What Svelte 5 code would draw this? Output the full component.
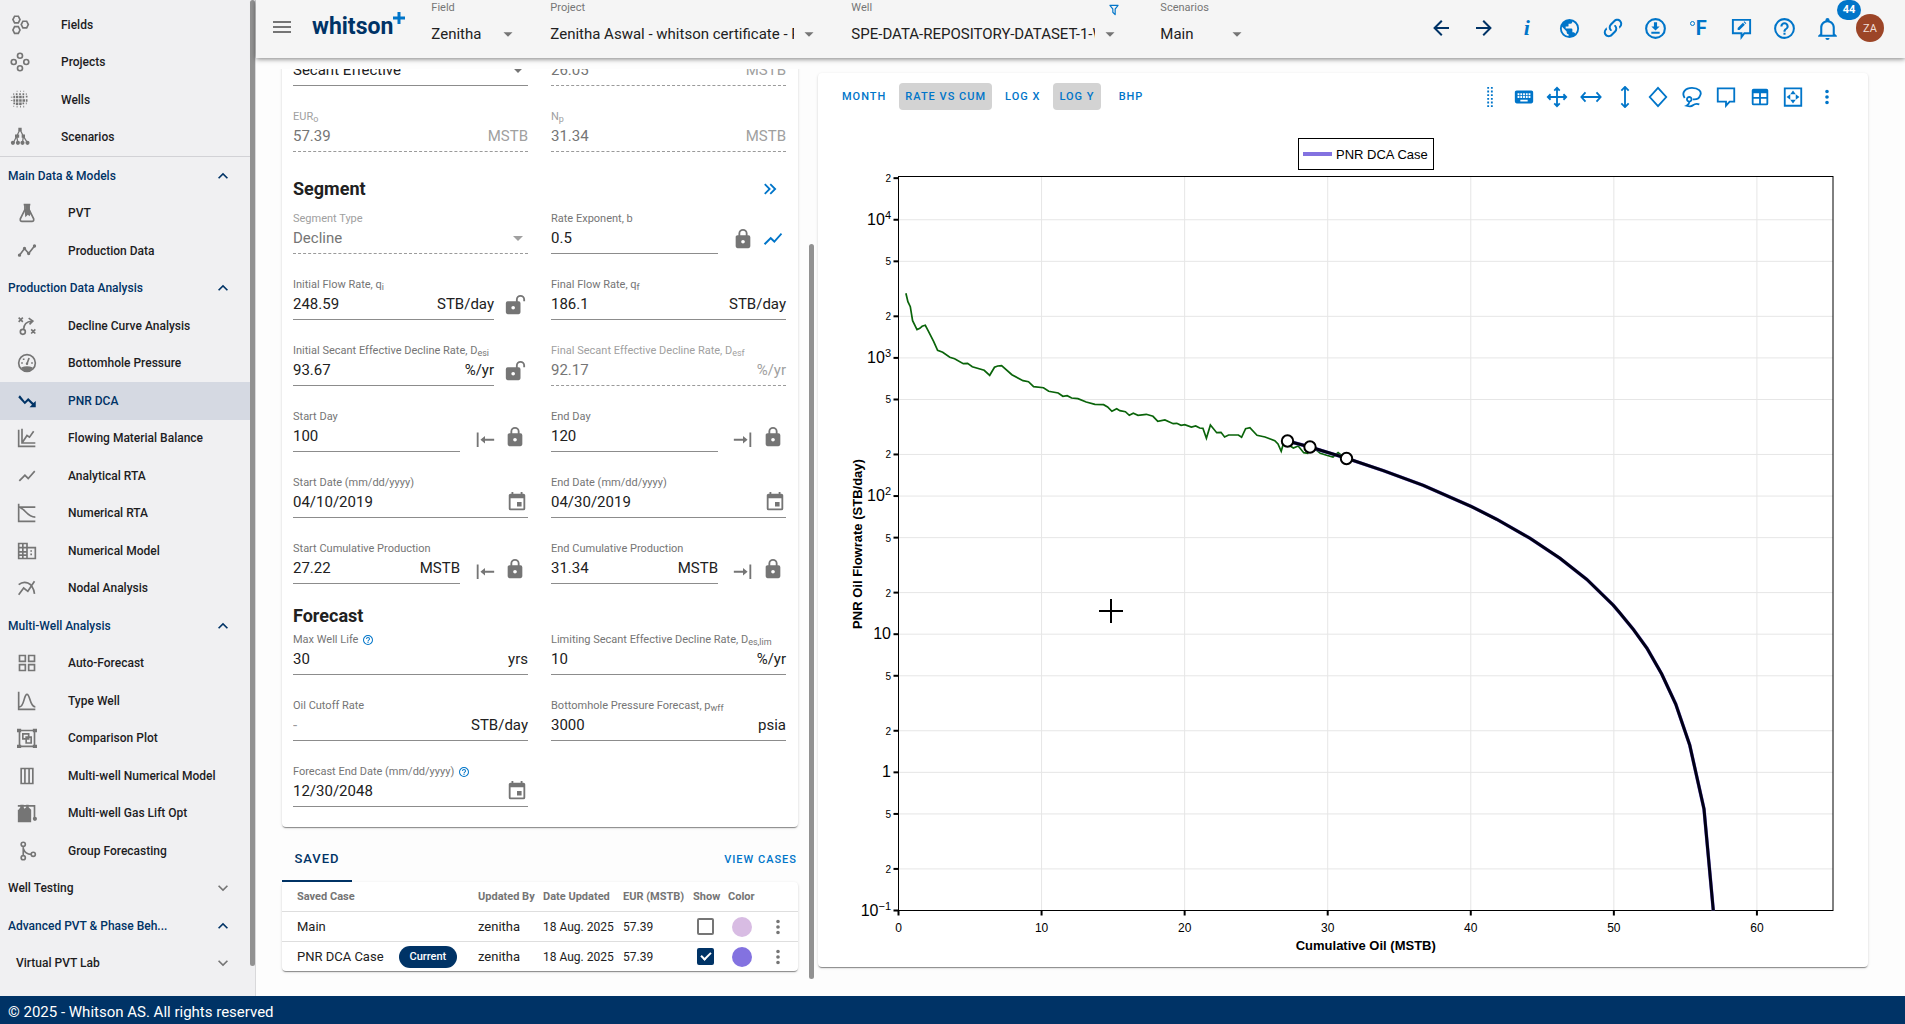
<script lang="ts">
  type Glyph = { f?: string; s?: string; w?: number };
  type NavItem = { label: string; icon: string; active?: boolean };
  type FieldDef = {
    id: string;
    label: string;
    sub?: string;
    value: string;
    unit?: string;
    kind?: 'select' | 'date';
    disabled?: boolean;
    help?: boolean;
    placeholder?: string;
    actions?: string[];
  };

  const icons: Record<string, Glyph> = {
    menu: { f: 'M3,6H21V8H3V6M3,11H21V13H3V11M3,16H21V18H3V16Z' },
    up: { f: 'M7.41,15.41L12,10.83L16.59,15.41L18,14L12,8L6,14L7.41,15.41Z' },
    down: { f: 'M7.41,8.58L12,13.17L16.59,8.58L18,10L12,16L6,10L7.41,8.58Z' },
    caret: { f: 'M6,9.500L12,15.500L18,9.500H6Z' },
    fields: { s: 'M5.500,1.500H10L12,5.500L10,9.500H5.500L3.500,5.500ZM5.500,14H10L12,18L10,22H5.500L3.500,18ZM15.500,7.500H20L22,11.500L20,15.500H15.500L13.500,11.500Z' },
    projects: { s: 'M9,4.500a3,3 0 1,0 6,0a3,3 0 1,0 -6,0M9,19.500a3,3 0 1,0 6,0a3,3 0 1,0 -6,0M1.500,12a3,3 0 1,0 6,0a3,3 0 1,0 -6,0M16.500,12a3,3 0 1,0 6,0a3,3 0 1,0 -6,0' },
    wells: { f: 'M8,1h1v1h-1zM12,1h1v1h-1zM16,1h1v1h-1zM4,4h1v2h-1zM7,4h2v2h-2zM11,4h2v2h-2zM15,4h2v2h-2zM19,4h1v2h-1zM1,8h2v1h-2zM4,7h2v3h-2zM7,7h3v3h-3zM11,7h3v3h-3zM15,7h2v3h-2zM19,7h2v2h-2zM1,12h2v1h-2zM4,11h2v3h-2zM7,11h3v3h-3zM11,11h3v3h-3zM15,11h3v3h-3zM19,11h2v3h-2zM4,15h2v2h-2zM7,15h3v3h-3zM11,15h3v3h-3zM15,15h2v2h-2zM19,15h1v2h-1zM4,19h1v1h-1zM8,19h1v2h-1zM12,19h1v2h-1zM16,19h1v2h-1z' },
    scenarios: { f: 'M10,1h4v4h-4zM6,9h5v4h-5zM14,9h4v4h-4zM1,19a2.500,2.500 0 1,0 5,0a2.500,2.500 0 1,0 -5,0M7,19a2.500,2.500 0 1,0 5,0a2.500,2.500 0 1,0 -5,0M12.500,19a2.500,2.500 0 1,0 5,0a2.500,2.500 0 1,0 -5,0M18.500,19a2.500,2.500 0 1,0 5,0a2.500,2.500 0 1,0 -5,0', s: 'M12,3L8,11L4,19M8,11L9.500,19M12,3L16,11L15,19M16,11L21,19', w: 1.500 },
    flask: { f: 'M8,1h8v2h-1v4l2,5l-2,4l-2,-2l-3,3l-1,-8l1,-2v-4h-2z', s: 'M9.500,2V8L4,19Q3.500,22 6,22H18Q20.500,22 20,19L14.500,8V2' },
    points: { f: 'M1,17a2,2 0 1,0 4,0a2,2 0 1,0 -4,0M7,9a2,2 0 1,0 4,0a2,2 0 1,0 -4,0M12,15a2,2 0 1,0 4,0a2,2 0 1,0 -4,0M19,6a2,2 0 1,0 4,0a2,2 0 1,0 -4,0', s: 'M3,17L9,9L14,15L21,6' },
    decline: { s: 'M2,2L7,7M7,2L2,7M17,16L22,21M22,16L17,21M4,19a3,3 0 1,0 6,0a3,3 0 1,0 -6,0M8,16C8,11 10,7 18,6M14,2.500L19,6L15,10' },
    gauge: { f: 'M5,17.500Q12,14 19,17.500Q16,22 12,22Q8,22 5,17.500zM10.500,13a1.500,1.500 0 1,0 3,0a1.500,1.500 0 1,0 -3,0M5,11h2v2h-2zM17,11h2v2h-2zM7,6.500h2v2h-2z', s: 'M2,12a10,10 0 1,0 20,0a10,10 0 1,0 -20,0M12,13L14.500,6' },
    trendDown: { f: 'M15,19.500L18,16.500L13.41,12L9.41,16L1.500,7.500L3.500,5L9.41,12.500L13.41,8.500L19.71,14.500L22.500,12V19.500H15Z' },
    balance: { s: 'M2,2V22H22M6,1V18H22M6,18L12,9L15,11L20,4' },
    trend: { f: 'M3.5,18.49L9.5,12.48L13.5,16.48L22,6.92L20.59,5.51L13.5,13.48L9.5,9.48L2,16.99L3.5,18.49Z' },
    numRta: { s: 'M2,1V22H22M2,5H22M4,6C10,7 12,17 22,17' },
    building: { s: 'M2,3H12V21H2ZM2,8H12M2,13H12M2,17H12M7,3V21M12,8H22V21H12M17,11V13M17,15V17' },
    nodal: { s: 'M2,20L8,12L13,16L21,4M2,8C8,3 19,4 21,19' },
    grid: { f: 'M2 11H11V2H2M4 4H9V9H4M13 22H22V13H13M15 15H20V20H15M2 22H11V13H2M4 15H9V20H4M13 2V11H22V2M20 9H15V4H20Z' },
    bell: { s: 'M2,1V22H22M3,19C9,19 8,4 12,4C16,4 15,19 22,19' },
    compare: { f: 'M0,1h5v4h-5zM19,1h5v4h-5zM0,20h5v4h-5zM19,20h5v4h-5z', s: 'M3,3H21V22H3ZM7,7H14V13H7ZM11,11H17V18H11Z' },
    columns: { s: 'M5,3H19V21H5ZM9.500,3V21M14.500,3V21' },
    gasLift: { f: 'M2,8L4,5V2H8V5L9,7L11,5V2H14V5L17,8V23H1V8ZM19,19a2.500,2.500 0 1,0 5,0a2.500,2.500 0 1,0 -5,0', s: 'M1,3.500H21V19' },
    branch: { s: 'M5,4a2.500,2.500 0 1,0 5,0a2.500,2.500 0 1,0 -5,0M5,20a2.500,2.500 0 1,0 5,0a2.500,2.500 0 1,0 -5,0M17,16a2.500,2.500 0 1,0 5,0a2.500,2.500 0 1,0 -5,0M7.500,6.500V17.500M7.500,9Q10,16 17,16' },
    filter: { f: 'M15,19.88C15.04,20.18 14.94,20.5 14.71,20.71C14.32,21.1 13.69,21.1 13.3,20.71L9.29,16.7C9.06,16.47 8.96,16.16 9,15.87V10.75L4.21,4.62C3.87,4.19 3.95,3.56 4.38,3.22C4.57,3.08 4.78,3 5,3H19C19.22,3 19.43,3.08 19.62,3.22C20.05,3.56 20.13,4.19 19.79,4.62L15,10.75V19.88M7.04,5L11,10.06V15.58L13,17.58V10.05L16.96,5H7.04Z' },
    back: { f: 'M20,11V13H8L13.5,18.5L12.08,19.92L4.16,12L12.08,4.08L13.5,5.5L8,11H20Z' },
    forward: { f: 'M4,11V13H16L10.5,18.5L11.92,19.92L19.84,12L11.92,4.08L10.5,5.5L16,11H4Z' },
    earth: { f: 'M17.9,17.39C17.64,16.59 16.89,16 16,16H15V13A1,1 0 0,0 14,12H8V10H10A1,1 0 0,0 11,9V7H13A2,2 0 0,0 15,5V4.59C17.93,5.77 20,8.64 20,12C20,14.08 19.2,15.97 17.9,17.39M11,19.93C7.05,19.44 4,16.08 4,12C4,11.38 4.08,10.78 4.21,10.21L9,15V16A2,2 0 0,0 11,18M12,2A10,10 0 0,0 2,12A10,10 0 0,0 12,22A10,10 0 0,0 22,12A10,10 0 0,0 12,2Z' },
    link: { f: 'M10.59,13.41C11,13.8 11,14.44 10.59,14.83C10.2,15.22 9.56,15.22 9.17,14.83C7.22,12.88 7.22,9.71 9.17,7.76V7.76L12.71,4.22C14.66,2.27 17.83,2.27 19.78,4.22C21.73,6.17 21.73,9.34 19.78,11.29L18.29,12.78C18.3,11.96 18.17,11.14 17.89,10.36L18.36,9.88C19.54,8.71 19.54,6.81 18.36,5.64C17.19,4.46 15.29,4.46 14.12,5.64L10.59,9.17C9.41,10.34 9.41,12.24 10.59,13.41M13.41,9.17C13.8,8.78 14.44,8.78 14.83,9.17C16.78,11.12 16.78,14.29 14.83,16.24V16.24L11.29,19.78C9.34,21.73 6.17,21.73 4.22,19.78C2.27,17.83 2.27,14.66 4.22,12.71L5.71,11.22C5.7,12.04 5.83,12.86 6.11,13.65L5.64,14.12C4.46,15.29 4.46,17.19 5.64,18.36C6.81,19.54 8.71,19.54 9.88,18.36L13.41,14.83C14.59,13.66 14.59,11.76 13.41,10.59C13,10.2 13,9.56 13.41,9.17Z' },
    download: { f: 'M8,17V15H16V17H8M16,10L12,14L8,10H10.5V6H13.5V10H16', s: 'M3,12a9,9 0 1,0 18,0a9,9 0 1,0 -18,0' },
    feedback: { f: 'M8,13.500V11.500L13.500,6L15.500,8L10,13.500ZM14.200,5.300L15,4.500L17,6.500L16.200,7.300Z', s: 'M3,3H21V17H15L12,21V17H3Z' },
    help: { f: 'M11,18H13V16H11V18M12,2A10,10 0 0,0 2,12A10,10 0 0,0 12,22A10,10 0 0,0 22,12A10,10 0 0,0 12,2M12,20C7.59,20 4,16.41 4,12C4,7.59 7.59,4 12,4C16.41,4 20,7.59 20,12C20,16.41 16.41,20 12,20M12,6A4,4 0 0,0 8,10H10A2,2 0 0,1 12,8A2,2 0 0,1 14,10C14,12 11,11.75 11,15H13C13,12.75 16,12.5 16,10A4,4 0 0,0 12,6Z' },
    alerts: { f: 'M10,21H14A2,2 0 0,1 12,23A2,2 0 0,1 10,21M21,19V20H3V19L5,17V11C5,7.9 7.03,5.17 10,4.29C10,4.19 10,4.1 10,4A2,2 0 0,1 12,2A2,2 0 0,1 14,4C14,4.1 14,4.19 14,4.29C16.97,5.17 19,7.9 19,11V17L21,19M17,11A5,5 0 0,0 12,6A5,5 0 0,0 7,11V18H17V11Z' },
    drag: { f: 'M9,1h2v2h-2zM13,1h2v2h-2zM9,5h2v2h-2zM13,5h2v2h-2zM9,9h2v2h-2zM13,9h2v2h-2zM9,13h2v2h-2zM13,13h2v2h-2zM9,17h2v2h-2zM13,17h2v2h-2zM9,21h2v2h-2zM13,21h2v2h-2z' },
    keyboard: { f: 'M19,10H17V8H19M19,13H17V11H19M16,10H14V8H16M16,13H14V11H16M16,17H8V15H16M7,10H5V8H7M7,13H5V11H7M8,11H10V13H8M8,8H10V10H8M11,11H13V13H11M11,8H13V10H11M20,5H4C2.89,5 2,5.89 2,7V17A2,2 0 0,0 4,19H20A2,2 0 0,0 22,17V7C22,5.89 21.1,5 20,5Z' },
    move: { s: 'M12,3V21M3,12H21M9,5L12,2L15,5M9,19L12,22L15,19M5,9L2,12L5,15M19,9L22,12L19,15' },
    moveX: { s: 'M2,12H22M6,7L1.500,12L6,17M18,7L22.500,12L18,17' },
    moveY: { s: 'M12,1V23M8,5L12,1L16,5M8,19L12,23L16,19' },
    diamond: { s: 'M12,2L21,12L12,22L3,12Z' },
    lasso: { s: 'M4,13C0,7 5,2 12,2C19,2 23,6 21,10C20,13 17,15 13,14.500M6.500,14.500a2.500,2.500 0 1,0 5,0a2.500,2.500 0 1,0 -5,0M9,17Q9,20 6,21.500Q11,23 13,21Q16,18.500 20,20' },
    comment: { s: 'M3,2.500H21V17H16L12,21.500V17H3Z' },
    table: { f: 'M5,3H19A2,2 0 0,1 21,5V19A2,2 0 0,1 19,21H5A2,2 0 0,1 3,19V5A2,2 0 0,1 5,3M5,8V12H11V8H5M13,8V12H19V8H13M5,14V19H11V14H5M13,14V19H19V14H13Z' },
    fit: { f: 'M12,5L15,9H9ZM12,19L15,15H9ZM5,12L9,9V15ZM19,12L15,9V15Z', s: 'M3,2.500H21V21.500H3Z' },
    dots: { f: 'M12,16A2,2 0 0,1 14,18A2,2 0 0,1 12,20A2,2 0 0,1 10,18A2,2 0 0,1 12,16M12,10A2,2 0 0,1 14,12A2,2 0 0,1 12,14A2,2 0 0,1 10,12A2,2 0 0,1 12,10M12,4A2,2 0 0,1 14,6A2,2 0 0,1 12,8A2,2 0 0,1 10,6A2,2 0 0,1 12,4Z' },
    lock: { f: 'M12,17A2,2 0 0,0 14,15C14,13.89 13.1,13 12,13A2,2 0 0,0 10,15A2,2 0 0,0 12,17M18,8A2,2 0 0,1 20,10V20A2,2 0 0,1 18,22H6A2,2 0 0,1 4,20V10C4,8.89 4.9,8 6,8H7V6A5,5 0 0,1 12,1A5,5 0 0,1 17,6V8H18M12,3A3,3 0 0,0 9,6V8H15V6A3,3 0 0,0 12,3Z' },
    unlock: { f: 'M18,1A5,5 0 0,0 13,6V8H4A2,2 0 0,0 2,10V20A2,2 0 0,0 4,22H16A2,2 0 0,0 18,20V10A2,2 0 0,0 16,8H15V6A3,3 0 0,1 18,3A3,3 0 0,1 21,6V8H23V6A5,5 0 0,0 18,1M10,13A2,2 0 0,1 12,15A2,2 0 0,1 10,17A2,2 0 0,1 8,15A2,2 0 0,1 10,13Z' },
    calendar: { f: 'M19,19H5V8H19M16,1V3H8V1H6V3H5C3.89,3 3,3.89 3,5V19A2,2 0 0,0 5,21H19A2,2 0 0,0 21,19V5C21,3.89 20.1,3 19,3H18V1M17,12H12V17H17V12Z' },
    toStart: { f: 'M7,15L12,11V19Z', s: 'M4,7V23M9,15H22' },
    toEnd: { f: 'M17,15L12,11V19Z', s: 'M20,7V23M2,15H15' },
    next: { f: 'M5.59,7.41L7,6L13,12L7,18L5.59,16.59L10.17,12L5.59,7.41M11.59,7.41L13,6L19,12L13,18L11.59,16.59L16.17,12L11.59,7.41Z' }
  };

  const topNav: NavItem[] = [
    { label: 'Fields', icon: 'fields' },
    { label: 'Projects', icon: 'projects' },
    { label: 'Wells', icon: 'wells' },
    { label: 'Scenarios', icon: 'scenarios' }
  ];

  const groups: { title: string; open: boolean; items: NavItem[] }[] = [
    {
      title: 'Main Data & Models',
      open: true,
      items: [
        { label: 'PVT', icon: 'flask' },
        { label: 'Production Data', icon: 'points' }
      ]
    },
    {
      title: 'Production Data Analysis',
      open: true,
      items: [
        { label: 'Decline Curve Analysis', icon: 'decline' },
        { label: 'Bottomhole Pressure', icon: 'gauge' },
        { label: 'PNR DCA', icon: 'trendDown', active: true },
        { label: 'Flowing Material Balance', icon: 'balance' },
        { label: 'Analytical RTA', icon: 'trend' },
        { label: 'Numerical RTA', icon: 'numRta' },
        { label: 'Numerical Model', icon: 'building' },
        { label: 'Nodal Analysis', icon: 'nodal' }
      ]
    },
    {
      title: 'Multi-Well Analysis',
      open: true,
      items: [
        { label: 'Auto-Forecast', icon: 'grid' },
        { label: 'Type Well', icon: 'bell' },
        { label: 'Comparison Plot', icon: 'compare' },
        { label: 'Multi-well Numerical Model', icon: 'columns' },
        { label: 'Multi-well Gas Lift Opt', icon: 'gasLift' },
        { label: 'Group Forecasting', icon: 'branch' }
      ]
    },
    { title: 'Well Testing', open: false, items: [] },
    { title: 'Advanced PVT & Phase Beh...', open: true, items: [] }
  ];

  const pickers = [
    { id: 'field', label: 'Field', value: 'Zenitha', size: 'small' },
    { id: 'project', label: 'Project', value: 'Zenitha Aswal - whitson certificate - PNR', size: 'large' },
    { id: 'well', label: 'Well', value: 'SPE-DATA-REPOSITORY-DATASET-1-WELL-1', size: 'large', filter: true },
    { id: 'scenario', label: 'Scenarios', value: 'Main', size: 'small' }
  ];

  const summary: FieldDef[] = [
    { id: 'decline-type', label: 'Decline Type', value: 'Secant Effective', kind: 'select' },
    { id: 'reserves', label: 'Reserves', value: '26.05', unit: 'MSTB', disabled: true },
    { id: 'eur', label: 'EUR', sub: 'o', value: '57.39', unit: 'MSTB', disabled: true },
    { id: 'np', label: 'N', sub: 'p', value: '31.34', unit: 'MSTB', disabled: true }
  ];

  const segment: FieldDef[] = [
    { id: 'seg-type', label: 'Segment Type', value: 'Decline', kind: 'select', disabled: true },
    { id: 'b', label: 'Rate Exponent, b', value: '0.5', actions: ['lock', 'trend'] },
    { id: 'qi', label: 'Initial Flow Rate, q', sub: 'i', value: '248.59', unit: 'STB/day', actions: ['unlock'] },
    { id: 'qf', label: 'Final Flow Rate, q', sub: 'f', value: '186.1', unit: 'STB/day' },
    { id: 'desi', label: 'Initial Secant Effective Decline Rate, D', sub: 'esi', value: '93.67', unit: '%/yr', actions: ['unlock'] },
    { id: 'desf', label: 'Final Secant Effective Decline Rate, D', sub: 'esf', value: '92.17', unit: '%/yr', disabled: true },
    { id: 'start-day', label: 'Start Day', value: '100', actions: ['toStart', 'lock'] },
    { id: 'end-day', label: 'End Day', value: '120', actions: ['toEnd', 'lock'] },
    { id: 'start-date', label: 'Start Date (mm/dd/yyyy)', value: '04/10/2019', kind: 'date' },
    { id: 'end-date', label: 'End Date (mm/dd/yyyy)', value: '04/30/2019', kind: 'date' },
    { id: 'start-cum', label: 'Start Cumulative Production', value: '27.22', unit: 'MSTB', actions: ['toStart', 'lock'] },
    { id: 'end-cum', label: 'End Cumulative Production', value: '31.34', unit: 'MSTB', actions: ['toEnd', 'lock'] }
  ];

  const forecast: FieldDef[] = [
    { id: 'life', label: 'Max Well Life', value: '30', unit: 'yrs', help: true },
    { id: 'deslim', label: 'Limiting Secant Effective Decline Rate, D', sub: 'es,lim', value: '10', unit: '%/yr' },
    { id: 'cutoff', label: 'Oil Cutoff Rate', value: '', placeholder: '-', unit: 'STB/day' },
    { id: 'pwff', label: 'Bottomhole Pressure Forecast, p', sub: 'wff', value: '3000', unit: 'psia' },
    { id: 'forecast-end', label: 'Forecast End Date (mm/dd/yyyy)', value: '12/30/2048', kind: 'date', help: true }
  ];

  const cases = [
    { name: 'Main', by: 'zenitha', date: '18 Aug. 2025', eur: '57.39', show: false, color: '#d8bce3' },
    { name: 'PNR DCA Case', by: 'zenitha', date: '18 Aug. 2025', eur: '57.39', show: true, color: '#8372e0', current: true }
  ];

  const modes = [
    { label: 'Month' },
    { label: 'Rate vs Cum', on: true },
    { label: 'Log X' },
    { label: 'Log Y', on: true },
    { label: 'BHP' }
  ];

  const tools = ['drag', 'keyboard', 'move', 'moveX', 'moveY', 'diamond', 'lasso', 'comment', 'table', 'fit', 'dots'];

  // chart geometry
  const left = 80.5;
  const right = 1015;
  const top = 53.5;
  const bottom = 787.5;
  const x = (v: number) => left + v * 14.307;
  const y = (v: number) => bottom - (Math.log10(v) + 1) * 138.15;

  const xTicks = [0, 10, 20, 30, 40, 50, 60];
  const yMajor = [
    { v: 0.1, base: '10', exp: '−1' },
    { v: 1, base: '1', exp: '' },
    { v: 10, base: '10', exp: '' },
    { v: 100, base: '10', exp: '2' },
    { v: 1000, base: '10', exp: '3' },
    { v: 10000, base: '10', exp: '4' }
  ];
  const yMinor = [0.2, 0.5, 2, 5, 20, 50, 200, 500, 2000, 5000, 20000];

  const history =
    '87.9,170.3 89.9,178.7 92.3,183.7 94.6,197.7 99,206.7 101.8,205.3 104.1,203.3 107.3,202.3 110.1,207.7 115.6,218.3 119.6,227.3 124.7,229.3 131.8,234.3 136.6,235.7 145.3,240.7 149.6,240.3 154.3,243.7 166.2,247.3 171.7,252.3 176.5,244.3 179.7,243 183.6,242.7 193.9,251.7 205,257.7 210.5,258.7 215.6,263.7 225.5,264.7 230.7,268.3 240.2,270 244.9,273.3 249.2,272.7 253.6,275 259.9,275.7 268.2,279 276.9,281.3 285.6,281.7 289.6,284 293.9,288.3 298.7,285.7 301.8,287.7 307.4,288.7 311.3,292.3 315.3,290.3 320,292.3 328.3,291.3 335,293.3 339.8,298.3 346.9,297 355.2,300.7 358.8,300.3 363.1,302.3 366.7,301.7 373.4,304 377.7,303 381.7,305 384.9,305.3 388.4,315.3 392.4,302 398.7,309.7 403,309.3 406.6,314 410.6,312 420.4,312 423.6,314.3 427.6,305.7 431.9,304.7 439,312.3 447,314 456.8,317.7 460,321 463.2,328.3 465.5,320.3 470.7,322 475.4,325 480.2,323 485.7,329.7 489.7,330.3 492.8,325.3 498.4,327 502.3,330.3 508.6,332.3 515,334 520.1,329.7 526,334.3';
  const decline =
    '469.5,318 492,324 528.7,335.3 565.3,347.7 605.3,362.3 653,383.3 678.7,396.3 712,415.3 742,435.3 768.7,456.3 795.3,482.3 801.3,489.3 815.3,506.3 829,525.3 843.7,551 857.7,581 871.7,622 886,686 895.3,787.3';
  const handles = [
    [469.5, 318],
    [492, 324],
    [528.5, 335.5]
  ];
</script>

{#snippet icon(name: string, size: number = 20)}
  <svg class="icon" width={size} height={size} viewBox="0 0 24 24" aria-hidden="true">
    {#if icons[name].f}<path d={icons[name].f} fill="currentColor" />{/if}
    {#if icons[name].s}
      <path d={icons[name].s} fill="none" stroke="currentColor" stroke-width={icons[name].w ?? 2} />
    {/if}
  </svg>
{/snippet}

{#snippet field(f: FieldDef)}
  <div class="row">
    <div class="field" class:disabled={f.disabled}>
      <label for={f.id}>
        {f.label}{#if f.sub}<sub>{f.sub}</sub>{/if}
        {#if f.help}<span class="hint">{@render icon('help', 12)}</span>{/if}
      </label>
      <div class="value">
        {#if f.kind === 'select'}
          <select id={f.id} disabled={f.disabled}><option>{f.value}</option></select>
          {@render icon('caret', 20)}
        {:else}
          <input id={f.id} type="text" value={f.value} placeholder={f.placeholder} disabled={f.disabled} />
          {#if f.unit}<span class="unit">{f.unit}</span>{/if}
          {#if f.kind === 'date'}
            <button class="ib" aria-label="Open calendar">{@render icon('calendar', 22)}</button>
          {/if}
        {/if}
      </div>
    </div>
    {#if f.actions}
      <div class="actions" class:two={f.actions.length === 2}>
        {#each f.actions as a}
          <button class="ib" class:blue={a === 'trend'} aria-label={a}>{@render icon(a, 22)}</button>
        {/each}
      </div>
    {/if}
  </div>
{/snippet}

<div class="app">
  <div class="body">
    <aside>
      <ul class="nav top">
        {#each topNav as item}
          <li><a href="#{item.icon}">{@render icon(item.icon)}<span>{item.label}</span></a></li>
        {/each}
      </ul>
      <ul class="nav main">
        {#each groups as g}
          <li>
            <button class="group" class:open={g.open}>
              <span>{g.title}</span>{@render icon(g.open ? 'up' : 'down', 20)}
            </button>
          </li>
          {#each g.items as item}
            <li class:active={item.active}>
              <a class="sub" href="#{item.icon}">{@render icon(item.icon)}<span>{item.label}</span></a>
            </li>
          {/each}
        {/each}
        <li>
          <button class="group nested"><span>Virtual PVT Lab</span>{@render icon('down', 20)}</button>
        </li>
      </ul>
      <div class="thumb"></div>
    </aside>

    <div class="page">
      <header>
        <button class="ib" aria-label="Toggle menu">{@render icon('menu', 24)}</button>
        <a class="logo" href="#home">whitson<svg width="12" height="12" viewBox="0 0 12 12"><path d="M6,0V12M0,6H12" stroke="#0075c9" stroke-width="3" /></svg></a>
        <div class="pickers">
          {#each pickers as p}
            <div class="picker {p.size}">
              <label for={p.id}>{p.label}</label>
              {#if p.filter}<button class="ib funnel" aria-label="Filter wells">{@render icon('filter', 14)}</button>{/if}
              <div class="pick">
                <select id={p.id}><option>{p.value}</option></select>
                {@render icon('caret', 18)}
              </div>
            </div>
          {/each}
        </div>
        <div class="tray">
          <button class="ib navy" aria-label="Back">{@render icon('back', 24)}</button>
          <button class="ib navy" aria-label="Forward">{@render icon('forward', 24)}</button>
          <button class="ib info" aria-label="Info">i</button>
          <button class="ib" aria-label="Language">{@render icon('earth', 23)}</button>
          <button class="ib" aria-label="Copy link">{@render icon('link', 24)}</button>
          <button class="ib" aria-label="Download">{@render icon('download', 25)}</button>
          <button class="ib unit-f" aria-label="Units"><i></i>F</button>
          <button class="ib" aria-label="Feedback">{@render icon('feedback', 23)}</button>
          <button class="ib" aria-label="Help">{@render icon('help', 25)}</button>
          <button class="ib" aria-label="Notifications">{@render icon('alerts', 25)}<b class="count">44</b></button>
          <button class="avatar">ZA</button>
        </div>
      </header>

      <main>
        <section class="panel">
          <div class="card form">
            <div class="fields">
              {#each summary as f}{@render field(f)}{/each}
            </div>
            <div class="head seg">
              <h2>Segment</h2>
              <button class="ib blue" aria-label="Next segment">{@render icon('next', 22)}</button>
            </div>
            <div class="fields">
              {#each segment as f}{@render field(f)}{/each}
            </div>
            <div class="head fc"><h2>Forecast</h2></div>
            <div class="fields">
              {#each forecast as f}{@render field(f)}{/each}
            </div>
          </div>

          <div class="tabs">
            <button class="tab">Saved</button>
            <button class="view">View cases</button>
          </div>
          <div class="card">
            <table>
              <colgroup>
                <col /><col class="c-by" /><col class="c-date" /><col class="c-eur" /><col class="c-small" /><col class="c-small" /><col class="c-small" />
              </colgroup>
              <thead>
                <tr>
                  <th>Saved Case</th><th>Updated By</th><th>Date Updated</th><th>EUR (MSTB)</th><th>Show</th><th>Color</th><th></th>
                </tr>
              </thead>
              <tbody>
                {#each cases as c}
                  <tr>
                    <td><span class="name">{c.name}{#if c.current}<b class="chip">Current</b>{/if}</span></td>
                    <td>{c.by}</td>
                    <td class="num">{c.date}</td>
                    <td class="num">{c.eur}</td>
                    <td class="mark"><input type="checkbox" checked={c.show} aria-label="Show {c.name}" /></td>
                    <td class="mark"><button class="dot" style="background: {c.color}" aria-label="Color of {c.name}"></button></td>
                    <td class="mark"><button class="ib" aria-label="More">{@render icon('dots', 22)}</button></td>
                  </tr>
                {/each}
              </tbody>
            </table>
          </div>
          <div class="thumb"></div>
        </section>

        <section class="card chart">
          <div class="bar">
            <div class="modes">
              {#each modes as m}
                <button class:on={m.on}>{m.label}</button>
              {/each}
            </div>
            <div class="tools">
              {#each tools as t}
                <button class="ib blue" aria-label={t}>{@render icon(t, 22)}</button>
              {/each}
            </div>
          </div>

          <svg class="plot" viewBox="0 0 1050 844" role="img" aria-label="PNR oil flowrate against cumulative oil">
            <g stroke="#e6e6e6">
              {#each xTicks.slice(1) as t}<line x1={x(t)} x2={x(t)} y1={top} y2={bottom} />{/each}
              {#each yMajor.slice(1) as t}<line x1={left} x2={right} y1={y(t.v)} y2={y(t.v)} />{/each}
              {#each yMinor.slice(0, -1) as t}<line x1={left} x2={right} y1={y(t)} y2={y(t)} />{/each}
            </g>
            <rect x={left} y={top} width={right - left} height={bottom - top} fill="none" stroke="#000" />

            <g stroke="#000" stroke-width="2">
              {#each xTicks as t}<line x1={x(t)} x2={x(t)} y1={bottom} y2={bottom + 5} />{/each}
              {#each yMajor as t}<line x1={left - 5} x2={left} y1={y(t.v)} y2={y(t.v)} />{/each}
              {#each yMinor as t}<line x1={left - 5} x2={left} y1={y(t)} y2={y(t)} />{/each}
            </g>

            {#each xTicks as t}
              <text class="tick" x={x(t)} y={bottom + 21} text-anchor="middle">{t}</text>
            {/each}
            {#each yMinor as t}
              <text class="minor" x="73" y={y(t) + 4} text-anchor="end">{String(t).replace(/[0.]/g, '')}</text>
            {/each}
            {#each yMajor as t}
              <text class="major" x="73" y={y(t.v) + 5} text-anchor="end">{t.base}{#if t.exp}<tspan class="exp" dy="-6">{t.exp}</tspan>{/if}</text>
            {/each}

            <text class="title" x={(left + right) / 2} y="827" text-anchor="middle">Cumulative Oil (MSTB)</text>
            <text class="title" x="0" y="0" text-anchor="middle" transform="translate(44 421) rotate(-90)">PNR Oil Flowrate (STB/day)</text>

            <rect x="480.5" y="15.5" width="135" height="31" fill="#fff" stroke="#000" />
            <line x1="485" x2="514" y1="31" y2="31" stroke="#8372e0" stroke-width="4" />
            <text class="legend" x="518" y="36">PNR DCA Case</text>

            <polyline points={history} fill="none" stroke="#0a640a" stroke-width="1.7" />
            <polyline points={decline} fill="none" stroke="#8372e0" stroke-width="3.5" />
            <polyline points={decline} fill="none" stroke="#000014" stroke-width="3" />
            {#each handles as [cx, cy]}
              <circle {cx} {cy} r="5.7" fill="#fff" stroke="#000" stroke-width="2" />
            {/each}
            <path d="M293,476V500M281,488H305" stroke="#000" stroke-width="2" />
          </svg>
        </section>
      </main>
    </div>
  </div>
  <footer>© 2025 - Whitson AS. All rights reserved</footer>
</div>

<style>
  :global(body) {
    margin: 0;
    background: #fdfdfd;
    font-family: Roboto, 'Liberation Sans', sans-serif;
    color: #212121;
  }

  button,
  input,
  select {
    font: inherit;
    color: inherit;
    background: none;
    border: 0;
    padding: 0;
    margin: 0;
    outline: none;
  }

  button {
    cursor: pointer;
  }

  .icon {
    display: block;
    flex: none;
  }

  .ib {
    display: flex;
    align-items: center;
    justify-content: center;
    flex: none;
    color: #757575;
  }

  .ib.blue {
    color: #0075c9;
  }

  .app {
    height: 100vh;
    display: flex;
    flex-direction: column;
    overflow: hidden;
  }

  .body {
    flex: 1;
    min-height: 0;
    display: flex;
  }

  /* sidebar */
  aside {
    position: relative;
    flex: none;
    width: 255px;
    background: #f0f0f2;
    border-right: 1px solid #d9d9db;
    overflow: hidden;
  }

  .nav {
    list-style: none;
    margin: 0;
    padding: 0;
    display: grid;
    grid-auto-rows: 1fr;
    width: 250px;
    font-size: 12px;
    font-weight: 500;
  }

  .nav.top {
    height: 150px;
    padding-top: 6px;
    border-bottom: 1px solid #d2d2d6;
  }

  .nav.main {
    height: 825px;
  }

  .nav li {
    display: flex;
  }

  .nav a {
    flex: 1;
    display: flex;
    align-items: center;
    gap: 31px;
    padding-left: 10px;
    color: #1d1d1f;
    text-decoration: none;
  }

  .nav a .icon {
    color: #757575;
  }

  .nav a.sub {
    padding-left: 17px;
  }

  .nav .active {
    background: #d5d9e2;
  }

  .nav .active a,
  .nav .active .icon {
    color: #003366;
  }

  .group {
    flex: 1;
    display: flex;
    align-items: center;
    justify-content: space-between;
    padding: 0 17px 0 8px;
    color: #1d1d1f;
  }

  .group .icon {
    color: #757575;
  }

  .group.nested {
    padding-left: 16px;
  }

  .group.open,
  .group.open .icon {
    color: #003366;
  }

  .thumb {
    position: absolute;
    right: 0;
    width: 5px;
    border-radius: 3px;
    background: #929292;
  }

  aside .thumb {
    top: 0;
    bottom: 30px;
  }

  /* header */
  .page {
    flex: 1;
    min-width: 0;
    display: flex;
    flex-direction: column;
  }

  header {
    position: relative;
    z-index: 2;
    height: 58px;
    display: flex;
    align-items: center;
    padding: 0 21px 0 14px;
    background: #f5f5f5;
    box-shadow: 0 1px 5px rgba(0, 0, 0, 0.5);
  }

  header > .ib {
    margin-bottom: 4px;
  }

  .logo {
    display: flex;
    align-items: flex-start;
    margin: 0 26px 4px 18px;
    font-size: 23px;
    line-height: 30px;
    font-weight: 700;
    color: #003366;
    text-decoration: none;
  }

  .pickers {
    display: flex;
    align-self: stretch;
    gap: 33px;
  }

  .picker {
    position: relative;
    width: 268px;
  }

  .picker.small {
    width: 86px;
  }

  .picker:last-child {
    margin-left: 8px;
  }

  .picker label {
    display: block;
    font-size: 11px;
    line-height: 16px;
    color: #757575;
  }

  .funnel {
    position: absolute;
    top: 3px;
    right: -2px;
    color: #0075c9;
  }

  .pick {
    display: flex;
    align-items: center;
    gap: 6px;
    margin-top: 8px;
  }

  .pick .icon {
    color: #757575;
  }

  select {
    appearance: none;
    flex: 1;
    min-width: 0;
    overflow: hidden;
    opacity: 1;
    text-overflow: clip;
  }

  .pick select {
    font-size: 15px;
    height: 20px;
  }

  .tray {
    display: flex;
    align-items: center;
    justify-content: space-between;
    width: 457px;
    margin: 0 0 2px auto;
  }

  .tray .ib {
    position: relative;
    width: 28px;
    height: 28px;
    color: #0075c9;
  }

  .tray .navy {
    color: #003366;
  }

  .tray .info {
    font-family: 'Liberation Serif', serif;
    font-size: 22px;
    font-style: italic;
    font-weight: 700;
  }

  .tray .unit-f {
    font-size: 20px;
    font-weight: 700;
    gap: 1px;
  }

  .unit-f i {
    width: 3px;
    height: 3px;
    margin-bottom: 10px;
    border: 1px solid #0075c9;
    border-radius: 50%;
  }

  .count {
    position: absolute;
    left: 24px;
    top: -14px;
    width: 24px;
    height: 20px;
    border-radius: 10px;
    background: #0075c9;
    color: #fff;
    font-size: 11px;
    line-height: 20px;
  }

  .avatar {
    width: 28px;
    height: 28px;
    border-radius: 50%;
    background: #9c4527;
    color: #f0dfd8;
    font-size: 11px;
  }

  /* content */
  main {
    flex: 1;
    min-height: 0;
    display: grid;
    grid-template-columns: 536px minmax(0, 1fr);
    gap: 4px;
    align-items: start;
    padding: 0 37px 0 22px;
  }

  .card {
    flex: none;
    background: #fff;
    border-radius: 4px;
    box-shadow:
      0 2px 1px -1px rgba(0, 0, 0, 0.3),
      0 1px 1px rgba(0, 0, 0, 0.14),
      0 1px 3px rgba(0, 0, 0, 0.14);
  }

  .panel {
    position: relative;
    display: flex;
    flex-direction: column;
    justify-content: flex-end;
    height: calc(100vh - 114px);
    margin-top: 11px;
    padding: 0 16px 8px 4px;
    box-sizing: border-box;
    overflow: hidden;
  }

  .panel .thumb {
    top: 175px;
    bottom: 0;
  }

  .form {
    padding: 20px 12px 20px 11px;
  }

  .fields {
    display: grid;
    grid-template-columns: 1fr 1fr;
    grid-auto-rows: 42px;
    gap: 24px 23px;
  }

  .row {
    display: flex;
    min-width: 0;
  }

  .field {
    flex: 1;
    min-width: 0;
    border-bottom: 1px solid #8c8c8c;
  }

  .field label {
    display: flex;
    align-items: center;
    height: 14px;
    font-size: 11px;
    line-height: 14px;
    color: #757575;
    white-space: nowrap;
  }

  .field sub {
    font-size: 9px;
    line-height: 9px;
    vertical-align: baseline;
    align-self: flex-end;
  }

  .hint {
    margin-left: 4px;
    color: #0075c9;
  }

  .value {
    display: flex;
    align-items: center;
    height: 20px;
    margin-top: 2px;
    font-size: 15px;
  }

  .value .icon {
    color: #757575;
  }

  .value input {
    flex: 1;
    min-width: 0;
    width: 0;
    height: 20px;
  }

  .value input::placeholder {
    color: #9a9a9a;
  }

  .disabled {
    border-bottom: 1px dashed #9a9a9a;
  }

  .disabled label,
  .disabled .unit,
  .disabled .icon {
    color: #a0a0a0;
  }

  .disabled input,
  .disabled select {
    color: #757575;
  }

  .actions {
    display: flex;
    align-items: center;
    justify-content: flex-end;
    gap: 8px;
    width: 34px;
    padding: 12px 2px 0 0;
    box-sizing: border-box;
  }

  .actions.two {
    width: 68px;
  }

  .head {
    display: flex;
    align-items: center;
    justify-content: space-between;
    height: 24px;
    padding-right: 5px;
  }

  .head.seg {
    margin: 25px 0 11px;
  }

  .head.fc {
    margin: 20px 0 5px;
  }

  h2 {
    margin: 0;
    font-size: 18px;
    line-height: 24px;
    font-weight: 700;
  }

  .tabs {
    flex: none;
    display: flex;
    align-items: flex-end;
    justify-content: space-between;
    height: 55px;
    padding-right: 1px;
    font-weight: 500;
    text-transform: uppercase;
  }

  .tab {
    min-width: 70px;
    height: 46px;
    border-bottom: 2px solid #003366;
    color: #003366;
    font-size: 13px;
    letter-spacing: 1px;
    text-transform: inherit;
  }

  .view {
    height: 46px;
    color: #0075c9;
    font-size: 11px;
    letter-spacing: 1px;
    text-transform: inherit;
  }

  table {
    width: 100%;
    table-layout: fixed;
    border-collapse: collapse;
    font-size: 13px;
  }

  .c-by {
    width: 65px;
  }

  .c-date {
    width: 80px;
  }

  .c-eur {
    width: 70px;
  }

  .c-small {
    width: 35px;
  }

  th,
  td {
    height: 29px;
    padding: 0;
    text-align: left;
    white-space: nowrap;
  }

  th {
    font-size: 11px;
    font-weight: 700;
    color: #757575;
  }

  .num {
    font-size: 12px;
  }

  tbody tr {
    border-top: 1px solid #dedede;
  }

  th:first-child,
  td:first-child {
    padding-left: 15px;
  }

  .name {
    display: flex;
    align-items: center;
    gap: 15px;
  }

  .chip {
    padding: 0 11px;
    border-radius: 11px;
    background: #003366;
    color: #fff;
    font-size: 11px;
    line-height: 22px;
    font-weight: 500;
  }

  .mark {
    padding-left: 4px;
  }

  .mark input {
    appearance: none;
    display: block;
    width: 17px;
    height: 17px;
    border: 2px solid #757575;
    border-radius: 2px;
    box-sizing: border-box;
  }

  .mark input:checked {
    position: relative;
    border-color: #003366;
    background: #003366;
  }

  .mark input:checked::after {
    content: '';
    position: absolute;
    left: 4px;
    top: 0;
    width: 4px;
    height: 8px;
    border: solid #fff;
    border-width: 0 2px 2px 0;
    transform: rotate(45deg);
  }

  .dot {
    display: block;
    width: 20px;
    height: 20px;
    border-radius: 50%;
  }

  /* chart */
  .chart {
    margin-top: 15px;
  }

  .bar {
    display: flex;
    align-items: flex-start;
    justify-content: space-between;
    height: 40px;
    padding: 10px 30px 0 18px;
  }

  .modes {
    display: flex;
    gap: 7px;
  }

  .modes button {
    min-width: 47px;
    height: 27px;
    padding: 0 6px;
    border-radius: 4px;
    color: #0075c9;
    font-size: 11px;
    font-weight: 500;
    letter-spacing: 1px;
    text-transform: uppercase;
  }

  .modes .on {
    background: #d3d3d3;
  }

  .tools {
    display: flex;
    align-items: center;
    justify-content: space-between;
    width: 359px;
    height: 27px;
  }

  .plot {
    display: block;
    width: 100%;
    height: auto;
    font-family: 'Liberation Sans', sans-serif;
  }

  .tick {
    font-size: 12px;
  }

  .minor {
    font-size: 10px;
  }

  .major {
    font-size: 16px;
  }

  .exp {
    font-size: 11px;
  }

  .title {
    font-size: 13px;
    font-weight: 700;
  }

  .legend {
    font-size: 13px;
  }

  footer {
    flex: none;
    height: 28px;
    padding: 1px 8px 0;
    box-sizing: border-box;
    background: #003366;
    color: #fff;
    font-size: 15px;
    line-height: 31px;
  }
</style>
